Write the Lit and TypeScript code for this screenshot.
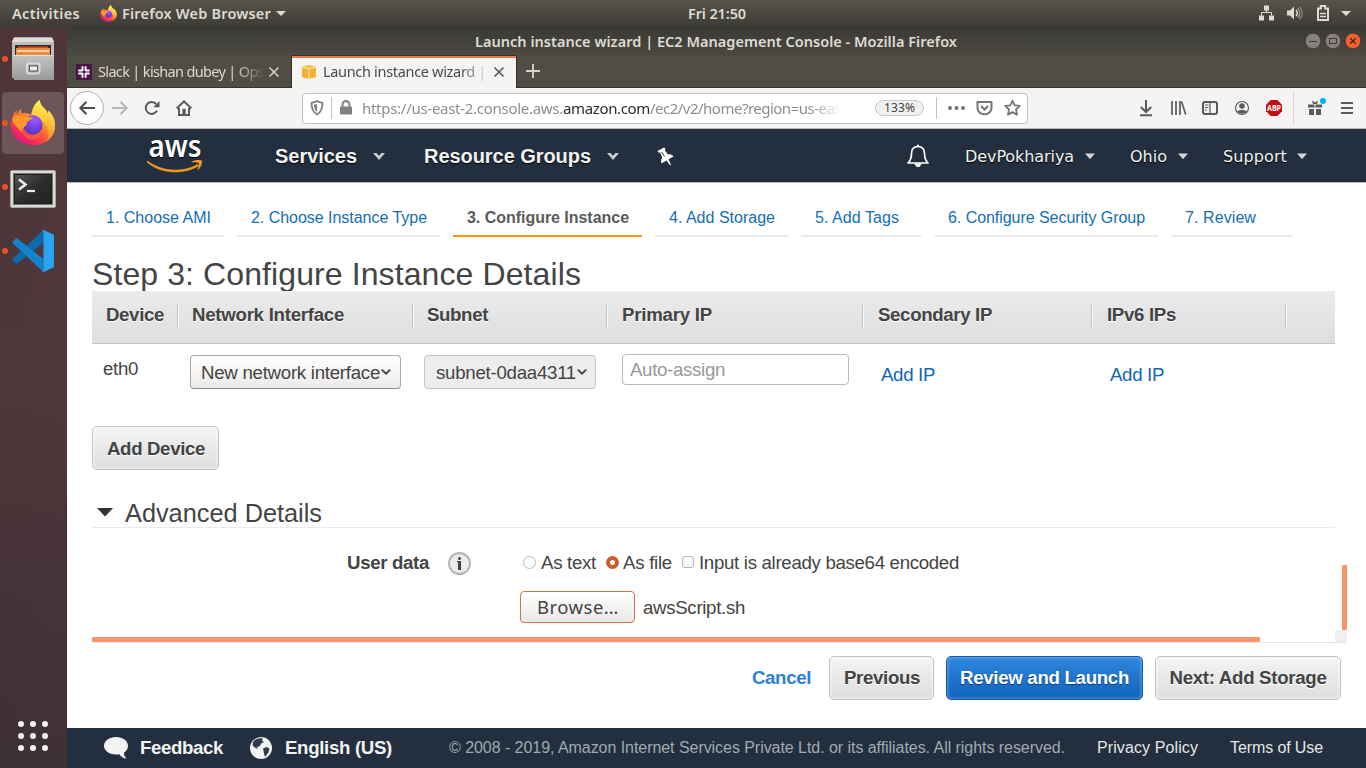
import { LitElement, html, css, svg } from "lit";
import { customElement, property } from "lit/decorators.js";

/** A line of text whose tracking is adjusted so that it fills a given width. */
@customElement("fit-text")
class FitText extends LitElement {
  @property({ type: Number }) w = 0;
  @property() text = "";
  static styles = css`
    :host { display: block; flex: none; white-space: pre; }
    span { display: inline-block; white-space: pre; }
  `;
  render() {
    return html`<span>${this.text}</span>`;
  }
  updated() {
    const s = this.renderRoot.querySelector("span") as HTMLElement;
    s.style.letterSpacing = "0px";
    const natural = s.getBoundingClientRect().width;
    s.style.letterSpacing = (this.w - natural) / this.text.length + "px";
    this.style.width = this.w + "px";
  }
}

const t = (text: string, w: number, cls = "") =>
  html`<fit-text class=${cls} .text=${text} .w=${w}></fit-text>`;

const firefox = (size: number, id: string) => html`
  <svg width=${size} height=${size} viewBox="0 0 48 48">
    <defs>
      <linearGradient id="${id}a" x1="0.85" y1="0.1" x2="0.25" y2="0.95">
        <stop offset="0" stop-color="#fff44f" /><stop offset="0.3" stop-color="#ffb52e" />
        <stop offset="0.55" stop-color="#ff6a35" /><stop offset="0.8" stop-color="#f9314e" /><stop offset="1" stop-color="#e31587" />
      </linearGradient>
      <radialGradient id="${id}b" cx="0.6" cy="0.25" r="0.8">
        <stop offset="0" stop-color="#a05aff" /><stop offset="0.5" stop-color="#7542e5" /><stop offset="1" stop-color="#4a3bb5" />
      </radialGradient>
      <linearGradient id="${id}c" x1="0.7" y1="0" x2="0.6" y2="1">
        <stop offset="0" stop-color="#fff44f" /><stop offset="0.5" stop-color="#ffc93c" /><stop offset="1" stop-color="#ff8a2e" stop-opacity="0.7" />
      </linearGradient>
    </defs>
    <path fill="url(#${id}a)" d="M31 0c0 4 3 7 6 10 1 1 2 3 2 4 1-1 1-2 1-3 5 5 7 10 7 16 0 12-10 20-23 20S1 38 1 26c0-4 1-7 2-9 0-3 2-5 4-6l0 4 4-6 1 5c2-1 4-1 6 0l4 1c1-6 4-12 9-15z" />
    <path fill="url(#${id}c)" d="M31 0c0 4 3 7 6 10 1 1 2 3 2 4 1-1 1-2 1-3 5 5 7 10 7 16 0 7-4 13-9 16 4-7 2-14-2-19-4-4-10-4-13-8 0-6 3-13 8-16z" />
    <circle cx="24" cy="26" r="10" fill="url(#${id}b)" />
    <path fill="#ff9a2a" d="M3 18c4-3 8-3 12-1 3 1 6 1 9 1 0 2-4 3-6 5-1 2 0 3-2 4-2 2-4 4-3 8-4-4-5-7-9-10-1-2-2-5-1-7z" />
    <path fill="#ff5a3a" opacity="0.85" d="M13 28c1 6 7 10 13 9 4-1 6-3 9-4-2 6-8 9-14 8-6-1-9-6-8-13z" />
  </svg>`;

const chev = (w: number, kind: string) =>
  kind === "v"
    ? html`<svg width=${w} height="8" viewBox="0 0 12 8"><path d="M0 1.1h3.4L6 3.7 8.6 1.1H12L6 8z" fill="#ccc" /></svg>`
    : html`<svg width=${w} height="6" viewBox="0 0 10 6"><path d="M0 0.5h10L5 6.3z" fill="#d4d4d4" /></svg>`;

const selChev = html`<svg class="selchev" width="10" height="8" viewBox="0 0 10 8"><path d="M0.8 1.6L5 5.6 9.2 1.6" fill="none" stroke="#444" stroke-width="1.9" /></svg>`;

@customElement("app-root")
class AppRoot extends LitElement {
  static styles = css`
    :host { display: flex; flex-direction: column; width: 1366px; height: 768px; overflow: hidden; background: #fff;
      font-family: "Liberation Sans", Arial, sans-serif; color: #444; }
    * { box-sizing: border-box; }
    svg { display: block; flex: none; overflow: visible; }
    .ubuntu { font-family: "Noto Sans", "Open Sans", sans-serif; }
    .b { font-weight: 600; }

    .top { height: 27px; flex: none; display: grid; grid-template-columns: 12px 88px 22px 150px 416px 570px 1fr; align-items: center;
      background: linear-gradient(#58544b, #3d3b36); color: #dfdbd2; font-size: 14.5px; font-weight: 600; padding-bottom: 1px; }
    .top > .sp { grid-column: 2; }
    .with-caret { display: flex; align-items: center; gap: 5px; }
    .tray { display: flex; align-items: center; gap: 12px; padding-left: 1px; }

    .main { flex: 1; display: flex; min-height: 0; }
    .dock { width: 67px; flex: none; display: flex; flex-direction: column; background: linear-gradient(100deg, rgba(0,0,0,0.03), transparent), linear-gradient(#50363b, #4f383c 50%, #453337 80%, #3e3134); }
    .slot { height: 64px; display: grid; grid-template-columns: 6px 50px; align-items: center; padding-left: 2px; }
    .slot i { width: 6px; height: 6px; border-radius: 3px; background: #e95420; }
    .slot svg { justify-self: center; }
    .slot.on { background: #6c565a; height: 62px; width: 62px; margin: 1px 0 1px 2px; padding-left: 0; border-radius: 4px; }
    .term { margin-top: 3px; }
    .apps { margin-top: auto; display: grid; grid-template-columns: repeat(3, 6px); gap: 6px; padding: 0 0 17px 18px; }
    .apps i { width: 6px; height: 6px; border-radius: 3px; background: #f4f2f0; }

    .win { flex: 1; min-width: 0; display: flex; flex-direction: column; }
    .title { height: 29px; flex: none; display: grid; grid-template-columns: 408px 1fr 61px; align-items: center; color: #dfdbd2; font-size: 14.5px; padding-bottom: 2px;
      background: linear-gradient(#3a3934, #4d4a43); }
    .wb { display: flex; gap: 4px; }
    .tabs { height: 32px; flex: none; display: flex; background: #504d45; border-bottom: 1px solid #36342f; }
    .tab { width: 224px; height: 32px; display: grid; align-items: center; grid-template-columns: 9px 22px 171px 12px; color: #dedad2; font-size: 14.5px; }
    .tab.on { width: 226px; background: #f5f4f2; color: #4a4a48; border: solid #36342f; border-width: 0 1px; box-shadow: 0 -1px #36342f, inset 0 2px #f07746; }
    .fade { overflow: hidden; padding-bottom: 2px; -webkit-mask-image: linear-gradient(90deg, #000 80%, transparent 98%); }
    .plus { margin: 8px 0 0 9px; }
    .bar { height: 41px; flex: none; background: #f5f4f2; border-bottom: 1px solid #b9b5ae; display: flex; align-items: center; }
    .back { width: 34px; height: 34px; border-radius: 50%; border: 1px solid #b4b2b0; background: #fdfdfc; margin-left: 3px; display: grid; place-items: center; }
    .bar > .ic { margin-left: 16px; }
    .bar > .fw { margin-left: 8px; }
    .url { width: 726px; height: 31px; margin-left: 110px; background: #fff; border: 1px solid #c4c1bd; border-radius: 4px; display: flex; align-items: center; font-size: 15px; color: #8e8e8e; }
    .url .sep { width: 1px; height: 22px; background: #c4c2c0; flex: none; }
    .addr { display: flex; width: 480px; margin-left: 10px; overflow: hidden; -webkit-mask-image: linear-gradient(90deg, #000 93%, transparent 100%); }
    .dom { color: #2c2c2c; }
    .zoom { width: 49px; height: 16px; border: 1px solid #c8c8c8; border-radius: 8px; background: #f0f0f0; color: #444; font-size: 12px; display: grid; place-items: center; margin-left: 33px; line-height: 14px; }

    .nav { height: 54px; flex: none; background: #232f3e; border-bottom: 1px solid #b7bbbf; color: #f2f2f2; display: grid; align-items: center; padding: 1px 0 0 80px;
      grid-template-columns: 128px 149px 233px 250px 58px 165px 93px 85px; text-shadow: 0 1px 1px #000; }
    .logo { margin-top: -3px; }
    .menu { display: flex; align-items: center; justify-content: space-between; font-size: 20px; font-weight: 700; }
    .menu.s { font-family: "DejaVu Sans", sans-serif; font-size: 16px; font-weight: 400; }
    .w1 { width: 110px; } .w2 { width: 195px; } .w3 { width: 130px; } .w4 { width: 58px; } .w5 { width: 84px; }

    .steps { flex: none; height: 54px; display: flex; padding-left: 25px; font-size: 16px; color: #146eb4; }
    .step { border-bottom: 2px solid #eaeaea; padding: 26px 0 0 14px; line-height: 18px; margin-right: 13px; }
    .step.g { margin-right: 14px; }
    .step.g { padding-left: 13px; }
    .step.s4 { padding-left: 14px; }
    .step.on { border-color: #ff9900; color: #5a5a5a; font-weight: 700; }
    .s0 { width: 132px; } .s1 { width: 203px; } .s2 { width: 189px; } .s3 { width: 133px; } .s4 { width: 120px; } .s5 { width: 223px; } .s6 { width: 120px; }
    .h1 { height: 54px; flex: none; padding: 19px 0 0 25px; font-size: 32px; line-height: 36px; overflow: hidden; }
    .scroll { height: 351px; flex: none; width: 1255px; margin-left: 25px; display: flex; }
    .sheet { width: 1243px; flex: none; display: flex; flex-direction: column; font-size: 18.67px; }
    .thead { height: 53px; flex: none; display: grid; grid-template-columns: 86px 235px 194px 256px 229px 194px 49px; background: linear-gradient(#ebebeb, #dedede); border-bottom: 1px solid #c4c4c4; font-weight: 700; text-shadow: 0 1px 0 #fff; }
    .th { height: 25px; margin-top: 12px; padding-left: 14px; line-height: 24px; border-right: 1px solid #c6c6c6; box-shadow: 1px 0 #f8f8f8; }
    .th.wide { padding-left: 15px; }
    .th:last-child { border: 0; box-shadow: none; }
    .row { height: 82px; flex: none; display: grid; grid-template-columns: 98px 234px 198px 259px 229px 1fr; align-items: start; line-height: 22px; }
    .row .c0 { padding: 14px 0 0 11px; } .row .ip { padding: 20px 0 0 0; color: #1166bb; }
    .select { height: 34px; margin-top: 11px; border: 1px solid #aaa; border-bottom-color: #8c8c8c; border-radius: 4px; background: linear-gradient(#fff, #eceae9); display: flex; align-items: center; width: 211px; padding: 2px 0 0 10px; }
    .select.d { width: 172px; background: #ededed; border-color: #c3c3c3; padding-left: 11px; }
    .selchev { margin: -2px 0 0 1px; }
    .input { width: 227px; height: 31px; margin-top: 10px; border: 1px solid #bbb; border-radius: 4px; padding: 4px 0 0 7px; color: #999; }
    .btn { height: 44px; border: 1px solid #c2c2c2; border-radius: 5px; background: linear-gradient(#f4f4f4, #dedede); box-shadow: inset 0 0 3px 1px rgba(255,255,255,0.6); display: grid; place-items: center; font-size: 18.67px; font-weight: 700; text-shadow: 0 1px #fff; color: #444; padding-left: 1px; }
    .add { width: 127px; flex: none; padding-top: 2px; }
    .adv { height: 58px; flex: none; border-bottom: 1px solid #eaeaea; display: flex; align-items: flex-end; font-size: 25.33px; line-height: 28px; }
    .adv svg { margin: 0 12px 10px 5px; }
    .ud { height: 63px; flex: none; display: grid; grid-template-columns: 255px 101px 75px 1fr; align-items: start; padding-top: 24px; line-height: 22px; }
    .ud .l { font-weight: 700; }
    .info { width: 23px; height: 23px; border-radius: 50%; border: 2px solid #b5b5b5; background: #ececec; display: grid; place-items: center; }
    .opts { display: flex; }
    .rad { width: 13px; height: 13px; border: 1px solid #b9b9b9; border-radius: 50%; background: #fff; margin: 4px 5px 0 0; flex: none; }
    .rad.on { border: 4px solid #cf5a2b; margin-left: 10px; margin-right: 4px; }
    .chk { width: 12px; height: 12px; border: 1px solid #b5b5b5; border-radius: 3px; margin: 4px 5px 0 10px; background: #fafafa; flex: none; }
    .file { display: flex; padding-left: 428px; align-items: center; height: 32px; flex: none; line-height: 22px; }
    .sh { padding-top: 2px; }
    .browse { width: 115px; height: 32px; border: 1px solid #d2714d; border-radius: 4px; background: linear-gradient(#fff, #ebe9e7); display: grid; place-items: center; font-size: 18.5px; margin-right: 8px; line-height: 20px; padding: 0 0 0 1px; }
    .hbar { height: 5px; width: 1168px; margin-top: 14px; background: #f6946e; border-radius: 1px; flex: none; }
    .vtrack { width: 12px; display: flex; flex-direction: column; align-items: flex-end; justify-content: flex-end; }
    .vbar { width: 5px; height: 65px; background: #f6946e; border-radius: 1px; }
    .corner { width: 12px; height: 12px; background: #f1f0ef; }
    .acts { flex: none; margin-left: 25px; width: 1255px; border-top: 1px solid #e6e6e6; height: 86px; padding: 13px 6px 0 0; display: flex; justify-content: flex-end; gap: 12px; }
    .cancel { color: #2e7fd9; font-weight: 700; font-size: 18.67px; line-height: 44px; margin-right: 6px; }
    .blue { background: linear-gradient(#2f87de, #1062bb); border-color: #0f5ba8; color: #fff; text-shadow: 0 1px 1px #0a3d75; box-shadow: inset 0 0 3px 1px rgba(255,255,255,0.3); }
    .p1 { width: 105px; } .p2 { width: 197px; padding: 0; } .p3 { width: 186px; padding: 0; }
    .foot { height: 40px; flex: none; background: #232f3e; display: grid; align-items: center; grid-template-columns: 36px 110px 35px 164px 648px 133px 1fr; padding: 0 0 1px 37px; font-size: 16px; color: #e6e6e6; }
    .foot .big { font-size: 18.67px; font-weight: 700; color: #f2f2f2; }
    .foot .cp { color: #a0aab0; }
  `;

  render() {
    return html`
      <div class="top ubuntu">
        ${t("Activities", 68, "sp")}
        ${firefox(17, "s")}
        <div class="with-caret">${t("Firefox Web Browser", 149)}<svg width="10" height="5"><path d="M0 0h10L5 5z" fill="#dfdbd2" /></svg></div>
        <span></span>
        <div>${t("Fri 21:50", 58)}</div>
        <div class="tray">
          <svg width="16" height="16" fill="#dfdbd2"><rect x="5" y="0.5" width="5" height="5" /><rect x="0" y="10.5" width="5" height="5" /><rect x="10" y="10.5" width="5" height="5" /><path d="M2.5 10.500V7.500h10v3M7.500 5v3" fill="none" stroke="#dfdbd2" /></svg>
          <svg width="17" height="16"><path d="M0 5.500h3L7 1.500v13L3 10.500H0z" fill="#dfdbd2" /><path d="M9 5c1.500 1.800 1.500 4.200 0 6" stroke="#dfdbd2" stroke-width="1.400" fill="none" /><path d="M10.700 3.400c2.600 2.700 2.600 6.500 0 9.200" stroke="#a8a49c" stroke-width="1.300" fill="none" /><path d="M12.500 1.800c3.600 3.700 3.600 8.700 0 12.400" stroke="#85817a" stroke-width="1.300" fill="none" /></svg>
          <svg width="13" height="16"><path d="M2 3.500h2.800V1h4.400v2.500H12V15H2z" fill="none" stroke="#dfdbd2" stroke-width="2" /><path d="M4 8.500h6M4 11.500h6" stroke="#dfdbd2" stroke-width="1.500" /></svg>
          <svg width="10" height="5"><path d="M0 0h10L5 5z" fill="#dfdbd2" /></svg>
        </div>
      </div>
      <div class="main">
        ${this.dock()}
        <div class="win">${this.chrome()}${this.page()}</div>
      </div>`;
  }

  dock() {
    return html`<div class="dock">
      <div class="slot"><i></i>
        <svg width="42" height="44" viewBox="0 0 42 44">
          <defs><linearGradient id="fg" x2="0" y2="1"><stop offset="0" stop-color="#c4c4c4" /><stop offset="1" stop-color="#9a9a9a" /></linearGradient></defs>
          <path d="M2 0.500h38L42 5v36H0V5z" fill="#bdbdbd" /><path d="M2 0.500h38L42 5H0z" fill="#dcdcdc" />
          <rect x="3" y="8" width="36" height="10" fill="#3a2a22" /><rect x="6" y="9.500" width="30" height="3" fill="#c9531f" /><rect x="4" y="11" width="34" height="8" fill="#e88b3c" /><path d="M5 14h32" stroke="#fbe6cf" stroke-width="1.500" />
          <path d="M0 19q0-1 1-1h40q1 0 1 1v24H2v-2H0z" fill="url(#fg)" /><path d="M1 18.500h40" stroke="#e4e4e4" />
          <rect x="15" y="26.500" width="12.500" height="10" rx="2" fill="#a9a9a9" stroke="#dadada" stroke-width="2" /><rect x="17.500" y="29" width="8" height="5" fill="#eee" stroke="#555" />
        </svg></div>
      <div class="slot on"><i></i>${firefox(46, "d")}</div>
      <div class="slot"><i></i>
        <svg class="term" width="46" height="38" viewBox="0 0 46 38">
          <defs><linearGradient id="tg" x2="1" y2="1"><stop offset="0" stop-color="#555" /><stop offset="0.500" stop-color="#2d2d2d" /><stop offset="1" stop-color="#222" /></linearGradient></defs>
          <rect x="0.500" y="0.500" width="45" height="37" rx="1.500" fill="#d9d9d6" stroke="#a5a5a2" /><rect x="3.500" y="3.500" width="39" height="31" fill="#1b1b1b" stroke="#777" /><rect x="5" y="5" width="36" height="28" fill="url(#tg)" />
          <path d="M9 9.500l6.500 5-6.500 5" fill="none" stroke="#eee" stroke-width="2.600" /><path d="M17 21h8" stroke="#eee" stroke-width="2.200" />
        </svg></div>
      <div class="slot"><i></i>
        <svg width="42" height="42" viewBox="0 0 42 42">
          <path d="M31.500 0L1 28.500q-1 1.200 0 2.300l2.600 2.400q1 .7 2 0L31.500 13z" fill="#0b6bab" />
          <path d="M31.500 42L1 13.500q-1-1.200 0-2.300l2.600-2.400q1-.7 2 0L31.500 29z" fill="#1384cb" />
          <path d="M31.500 0L41 4.200q1 .6 1 1.600v30.400q0 1-1 1.600L31.500 42q-1.300 0-2-1 2 .8 2-1.500V2.500q0-2-2-1.500 1-1 2-1z" fill="#2aa3f0" />
        </svg></div>
      <div class="apps">${Array.from({ length: 9 }, () => html`<i></i>`)}</div>
    </div>`;
  }

  chrome() {
    const winBtn = (fill: string, edge: string, mark: unknown) =>
      html`<svg width="16" height="16"><circle cx="8" cy="8" r="7.700" fill=${fill} stroke=${edge} stroke-width="0.600" />${mark}</svg>`;
    return html`
      <div class="title ubuntu b">
        <span></span>${t("Launch instance wizard | EC2 Management Console - Mozilla Firefox", 482)}
        <div class="wb">
          ${winBtn("#85827b", "#33322e", svg`<path d="M4 8.500h8" stroke="#3c3b37" />`)}
          ${winBtn("#85827b", "#33322e", svg`<rect x="4.500" y="5.500" width="7" height="5" fill="none" stroke="#3c3b37" />`)}
          ${winBtn("#ee6233", "#33322e", svg`<path d="M5.300 5.300l5.400 5.400M10.700 5.300l-5.400 5.400" stroke="#4a2013" stroke-width="1.300" />`)}
        </div>
      </div>
      <div class="tabs ubuntu">
        <div class="tab"><span></span>
          <svg width="16" height="16"><rect width="16" height="16" fill="#4a154b" /><g stroke="#fff" stroke-width="2" stroke-linecap="round"><path d="M6.500 3v3.300M3 6.500h3.300M9.600 3v3.300M12.800 6.500H9.800M9.600 13V9.700M12.800 9.600H9.800M6.500 13V9.700M3 9.600h3.300" /></g></svg>
          <div class="fade">${t("Slack | kishan dubey | Ops", 166)}</div>
          <svg width="10" height="10"><path d="M0.500 0.500l9 9M9.500 0.500l-9 9" stroke="#d8d4cc" stroke-width="1.500" /></svg>
        </div>
        <div class="tab on"><span></span>
          <svg width="16" height="14" viewBox="-1 0 16 14"><path d="M7 0l7 2v10l-7 2-7-2V2z" fill="#f4b12a" /><path d="M0 2l7 2 7-2-7-2z" fill="#f9c23c" /><path d="M0 2l7 2 7-2M7 4v10" fill="none" stroke="#fff3cf" stroke-width="0.900" /></svg>
          <div class="fade">${t("Launch instance wizard |", 163)}</div>
          <svg width="10" height="10"><path d="M0.500 0.500l9 9M9.500 0.500l-9 9" stroke="#55534f" stroke-width="1.500" /></svg>
        </div>
        <svg class="plus" width="14" height="14"><path d="M7 0v14M0 7h14" stroke="#d8d4cc" stroke-width="1.800" /></svg>
      </div>
      <div class="bar ubuntu">
        <div class="back"><svg width="16" height="14"><path d="M16 7H1.500M7.500 0.800L1.300 7l6.200 6.200" fill="none" stroke="#4c4c4c" stroke-width="2" /></svg></div>
        <svg class="fw" width="16" height="14"><path d="M0 7h14.500M8.500 0.800L14.700 7l-6.200 6.200" fill="none" stroke="#b8b6b4" stroke-width="2" /></svg>
        <svg class="ic" width="16" height="14"><path d="M12.300 3A6 6 0 1 0 13 9.800" fill="none" stroke="#5a5a5a" stroke-width="2" /><path d="M15.500 0v6.300H9.200z" fill="#5a5a5a" /></svg>
        <svg class="ic" width="16" height="16" fill="none" stroke="#5a5a5a"><path d="M0.700 8.500L8 1.300l7.300 7.200" stroke-width="2" /><path d="M3 8v7h10V8" stroke-width="2" /><rect x="6.800" y="9" width="2.500" height="5.500" fill="#5a5a5a" stroke-width="0.500" /></svg>
        <div class="url">
          <svg width="28" height="16"><path d="M8.500 2.800q2.800-.5 5.500-1.600 2.700 1.100 5.500 1.600c0 5.800-1.300 9.400-5.500 11.700-4.200-2.300-5.500-5.900-5.500-11.700z" fill="none" stroke="#808080" stroke-width="1.800" /><path d="M14 4v8c-2-1.600-3-4-3-7.300z" fill="#808080" /></svg>
          <span class="sep"></span>
          <svg width="20" height="16"><rect x="8" y="6.500" width="12" height="8" rx="1" fill="#808080" /><path d="M10.500 7V4.500a3.500 3.500 0 0 1 7 0V7" fill="none" stroke="#808080" stroke-width="2" /></svg>
          <div class="addr">${t("https://us-east-2.console.aws.", 201)}${t("amazon.com", 87, "dom")}${t("/ec2/v2/home?region=us-eas", 191)}</div>
          <div class="zoom">${t("133%", 31)}</div>
          <svg width="12" height="1"></svg><span class="sep"></span>
          <svg width="76" height="18" fill="#757575"><circle cx="13" cy="9" r="2" /><circle cx="19.500" cy="9" r="2" /><circle cx="26" cy="9" r="2" />
            <path d="M40.500 3h14v6a7 6.300 0 0 1-14 0z" fill="none" stroke="#757575" stroke-width="2" stroke-linejoin="round" /><path d="M44 7l3.500 3.500L51 7" fill="none" stroke="#757575" stroke-width="2" />
            <path d="M75.500 1.500l2.200 4.800 5.100.6-3.800 3.600 1 5.200-4.500-2.600-4.500 2.600 1-5.200-3.800-3.600 5.100-.6z" fill="none" stroke="#757575" stroke-width="1.800" stroke-linejoin="round" /></svg>
        </div>
        <svg width="338" height="34" viewBox="1028 91 338 34" fill="none" stroke="#5a5a5a" stroke-width="2">
          <path d="M1146 100v12M1140.800 107l5.200 5 5.200-5M1140 115.200h12" />
          <path d="M1172 101v14M1176 101v14M1180 101v14" stroke-width="1.700" /><path d="M1181.500 101.500l4.200 13" stroke-width="1.700" />
          <rect x="1203" y="102" width="14" height="12" rx="2" /><path d="M1210 102v12M1205 105h3.500M1205 107.500h3.500M1205 110h2" stroke-width="1.200" />
          <circle cx="1242" cy="108" r="6.500" stroke-width="1.200" /><circle cx="1242" cy="106" r="2.800" fill="#5a5a5a" stroke="none" /><path d="M1237 111.500q5-3.500 10 0-5 4.500-10 0z" fill="#5a5a5a" stroke="none" />
          <path d="M1270.700 100h6.600l4.700 4.700v6.600l-4.700 4.700h-6.600l-4.700-4.700v-6.600z" fill="#c70d12" stroke="none" />
          <text x="1267" y="111" font-size="8" font-weight="700" fill="#fff" stroke="none" textLength="14" lengthAdjust="spacingAndGlyphs">ABP</text>
          <path d="M1293.500 91v34" stroke="#d6d4d2" stroke-width="1" />
          <path d="M1308 104.500h6.500v3H1308zM1315.500 104.500h6.500v3h-6.500zM1309 109h5v6h-5zM1316 109h5v6h-5zM1312 100.500l3 2 3-2-1 3.500h-4z" fill="#5a5a5a" stroke="none" />
          <circle cx="1323" cy="101" r="3" fill="#00b3f4" stroke="none" />
          <path d="M1341 103h12M1341 108h12M1341 113h12" />
        </svg>
      </div>`;
  }

  page() {
    const steps: [string, number][] = [["1. Choose AMI", 105], ["2. Choose Instance Type", 176], ["3. Configure Instance", 162], ["4. Add Storage", 106], ["5. Add Tags", 84], ["6. Configure Security Group", 197], ["7. Review", 71]];
    const heads: [string, number][] = [["Device", 58], ["Network Interface", 152], ["Subnet", 61], ["Primary IP", 90], ["Secondary IP", 114], ["IPv6 IPs", 69]];
    return html`
      <div class="nav">
        <svg class="logo" width="56" height="36" viewBox="0 0 56 36">
          <text x="1.500" y="20" font-family="Noto Sans, sans-serif" font-weight="600" font-size="30" fill="#fff" textLength="53" lengthAdjust="spacingAndGlyphs">aws</text>
          <path d="M0.500 24C15 35 36 36 50.500 27.500l1 1.200C37 38 13 37 0 25z" fill="#f79a1c" stroke="#f79a1c" stroke-width="0.700" /><path d="M45 24.500c4-1.800 8.500-1.700 9.700-.8.900 1-.2 6.200-3.400 9-.5.300-.9.100-.7-.4.900-2.300 1.800-5 1-6.200-1-1-4.300-.9-6.300-.7-.7 0-.8-.6-.3-.9z" fill="#f79a1c" />
        </svg>
        <div class="menu w1">${t("Services", 82)}${chev(12, "v")}</div>
        <div class="menu w2">${t("Resource Groups", 167)}${chev(12, "v")}</div>
        <svg width="17" height="19" viewBox="0 0 17 19" fill="#fff"><path d="M0.500 4L7 0.500l1.500 1.200-.7 1.500L11 7.500c2-.5 4 0 5.500 2l-5 2.800 2.500 5.700-1 .3-3.500-4.800-5 3c-.8-2-.5-4.200.8-6L3 5.500l-1.700.1z" /><path d="M4.500 5l3 4.500" stroke="#232f3e" /></svg>
        <svg width="22" height="24" viewBox="0 0 22 24" fill="none" stroke="#fff" stroke-width="1.700"><path d="M11 2.500c-4.500 0-6.500 3-6.500 7 0 5-1 7-3.500 9.500h20c-2.500-2.500-3.500-4.500-3.500-9.500 0-4-2-7-6.500-7z" stroke-linejoin="round" /><path d="M10 1.500h2" /><path d="M8.500 20q2.500 4.500 5 0z" fill="#fff" /></svg>
        <div class="menu s w3">${t("DevPokhariya", 109)}${chev(10, "t")}</div>
        <div class="menu s w4">${t("Ohio", 37)}${chev(10, "t")}</div>
        <div class="menu s w5">${t("Support", 64)}${chev(10, "t")}</div>
      </div>
      <div class="steps">${steps.map(([s, w], i) => html`<div class="step s${i} ${i === 2 ? "on" : ""} ${i > 3 ? "g" : ""}">${t(s, w)}</div>`)}</div>
      <div class="h1">${t("Step 3: Configure Instance Details", 489)}</div>
      <div class="scroll">
        <div class="sheet">
          <div class="thead">${heads.map(([s, w], i) => html`<div class="th ${i > 2 ? "wide" : ""}">${t(s, w)}</div>`)}<div class="th"></div></div>
          <div class="row">
            <div class="c0">${t("eth0", 35)}</div>
            <div class="select">${t("New network interface", 179)}${selChev}</div>
            <div class="select d">${t("subnet-0daa4311", 140)}${selChev}</div>
            <div class="input">${t("Auto-assign", 95)}</div>
            <div class="ip">${t("Add IP", 54)}</div>
            <div class="ip">${t("Add IP", 54)}</div>
          </div>
          <div class="btn add">${t("Add Device", 98)}</div>
          <div class="adv"><svg width="16" height="9"><path d="M0 0h16L8 8.500z" fill="#333" /></svg>${t("Advanced Details", 197)}</div>
          <div class="ud">
            <span></span>
            <div class="l">${t("User data", 82)}</div>
            <div class="info"><svg width="5" height="13"><rect x="1" y="4" width="3" height="9" fill="#444" /><rect x="0" y="4" width="2" height="1" fill="#444" /><circle cx="2.500" cy="1.400" r="1.500" fill="#444" /></svg></div>
            <div class="opts">
              <div class="rad"></div>${t("As text", 55)}
              <div class="rad on"></div>${t("As file", 49)}
              <div class="chk"></div>${t("Input is already base64 encoded", 260)}
            </div>
          </div>
          <div class="file"><div class="browse ubuntu">${t("Browse…", 82)}</div>${t("awsScript.sh", 102, "sh")}</div>
          <div class="hbar"></div>
        </div>
        <div class="vtrack"><div class="vbar"></div><div class="corner"></div></div>
      </div>
      <div class="acts">
        <div class="cancel">${t("Cancel", 59)}</div>
        <div class="btn p1">${t("Previous", 76)}</div>
        <div class="btn blue p2">${t("Review and Launch", 169)}</div>
        <div class="btn p3">${t("Next: Add Storage", 157)}</div>
      </div>
      <div class="foot">
        <svg width="24" height="22" fill="#f4f4f4"><path d="M12 0c6.600 0 12 3.900 12 8.700 0 3-1.600 5.500-4.200 7.100 0 2.200 1 4 2.700 5.800-3.200-.3-5.500-1.800-7-4.400C6 18.500 0 14 0 8.700 0 3.900 5.400 0 12 0z" /></svg>
        ${t("Feedback", 83, "big")}
        <svg width="22" height="22" viewBox="0 0 22 22"><circle cx="11" cy="11" r="11" fill="#f4f4f4" /><path d="M4 3.500c3-2 6-2.500 9-2l-1 2 2 1.500-3 1.500-1 2.500-3 1 1 2-2.500-1L3 9c-1-2 0-4 1-5.500zM13 11.500l3.500-1.500 3 1.500-1 4-3.500 4.500-1-3.500z" fill="#2f3b49" /></svg>
        ${t("English (US)", 107, "big")}
        ${t("© 2008 - 2019, Amazon Internet Services Private Ltd. or its affiliates. All rights reserved.", 616, "cp")}
        ${t("Privacy Policy", 101)}
        ${t("Terms of Use", 93)}
      </div>`;
  }
}
